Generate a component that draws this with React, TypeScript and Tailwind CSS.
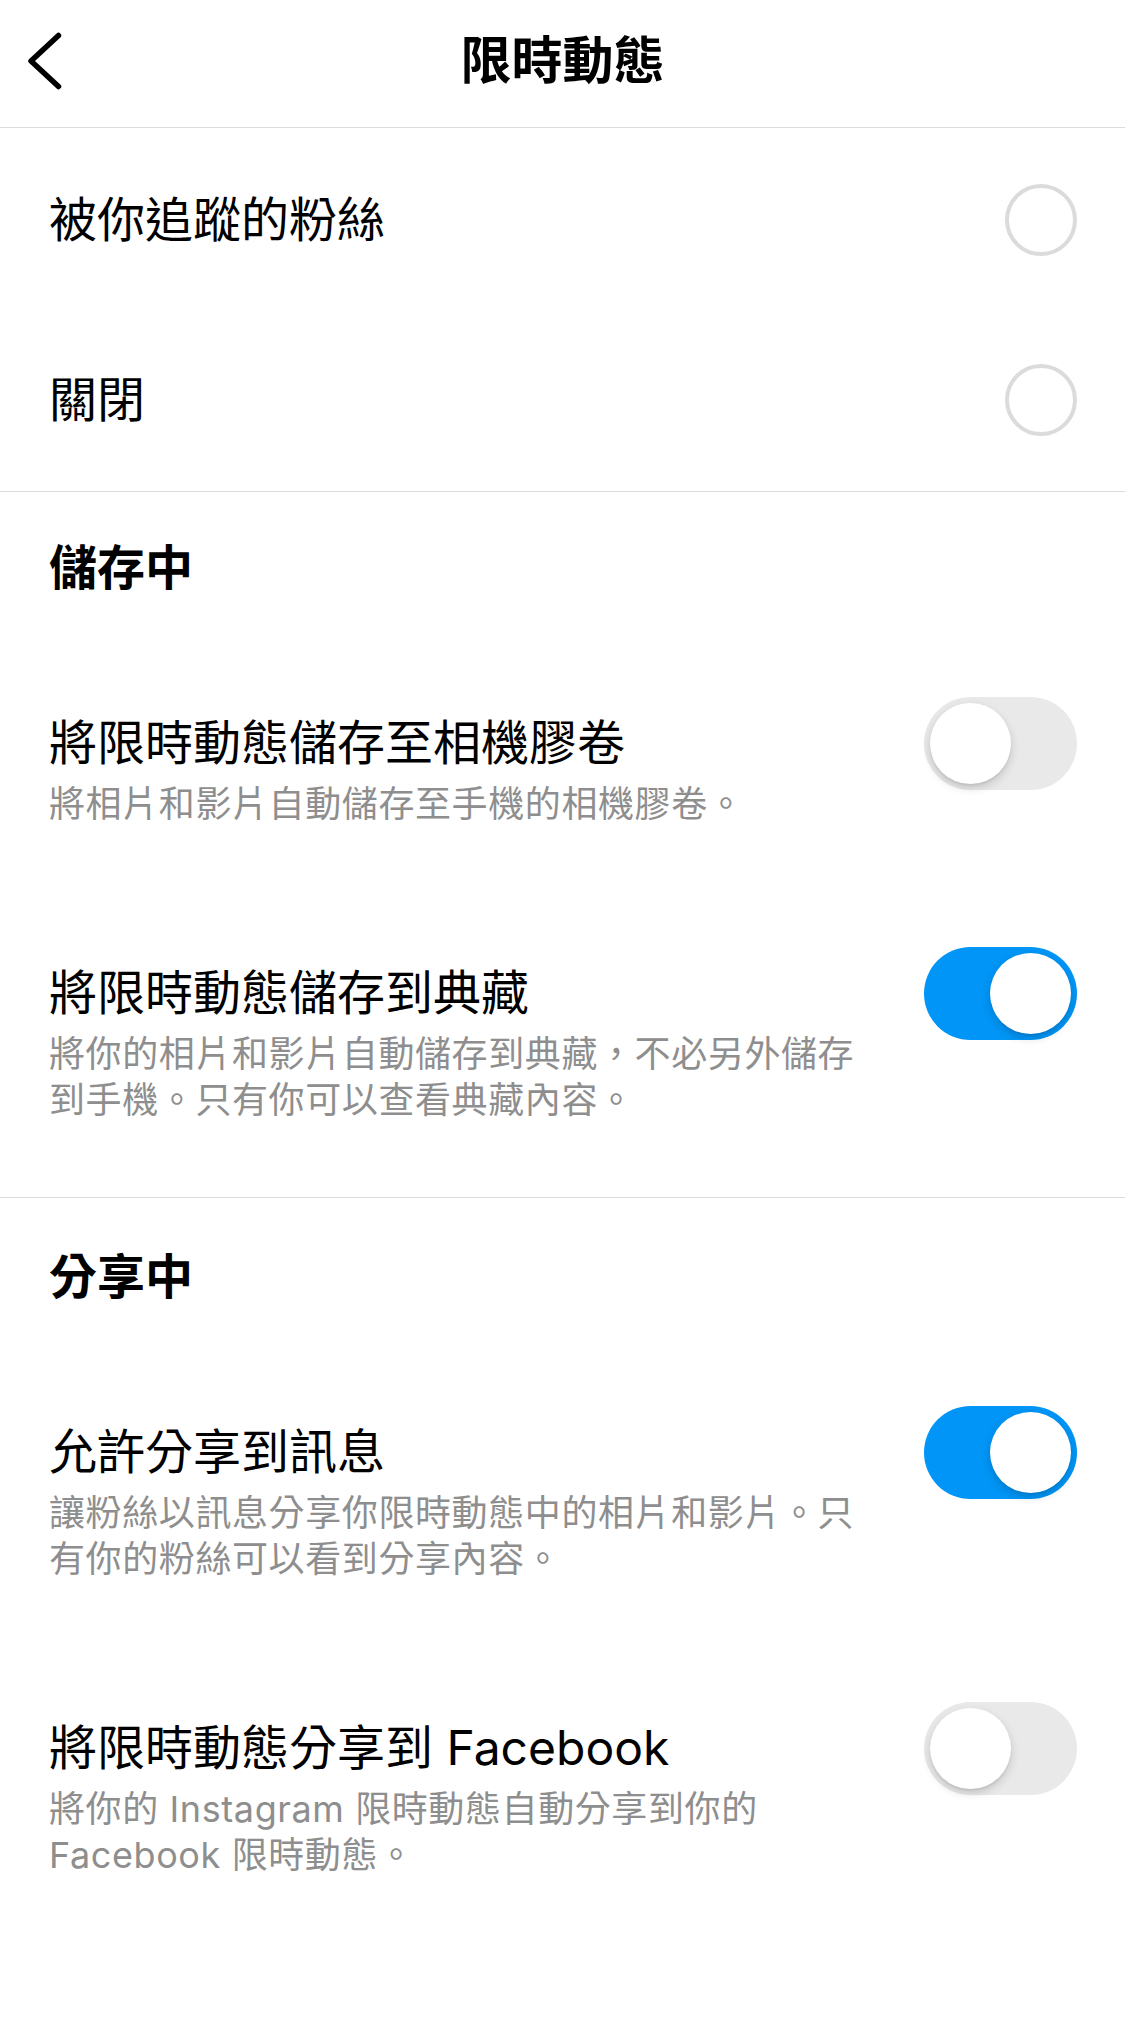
import React, { useState } from "react";

const font = { fontFamily: 'Inter, "Noto Sans CJK TC", "Noto Sans CJK SC", sans-serif' };

const Toggle = ({ on, onClick }: { on: boolean; onClick: () => void }) => (
	<button
		onClick={onClick}
		className={`relative flex h-[93px] w-[153px] shrink-0 items-center rounded-full px-[6px] ${
			on ? "justify-end bg-[#0095f6]" : "justify-start bg-[#e9e9ea]"
		}`}
	>
		<span className="block h-[81px] w-[81px] rounded-full bg-white shadow-[0_4px_10px_rgba(0,0,0,0.16),0_2px_2px_rgba(0,0,0,0.06)]" />
	</button>
);

const Radio = () => (
	<div className="h-[72px] w-[72px] rounded-full border-[4px] border-[#dbdbdb]" />
);

const settingRows = [
	{
		section: "儲存中",
		rows: [
			{
				title: "將限時動態儲存至相機膠卷",
				desc: "將相片和影片自動儲存至手機的相機膠卷。",
				on: false,
			},
			{
				title: "將限時動態儲存到典藏",
				desc: "將你的相片和影片自動儲存到典藏，不必另外儲存到手機。只有你可以查看典藏內容。",
				on: true,
			},
		],
	},
	{
		section: "分享中",
		rows: [
			{
				title: "允許分享到訊息",
				desc: "讓粉絲以訊息分享你限時動態中的相片和影片。只有你的粉絲可以看到分享內容。",
				on: true,
			},
			{
				title: "將限時動態分享到 Facebook",
				desc: "將你的 Instagram 限時動態自動分享到你的 Facebook 限時動態。",
				on: false,
			},
		],
	},
];

const StorySettings = () => {
	const [toggles, setToggles] = useState<boolean[][]>(
		settingRows.map((s) => s.rows.map((r) => r.on))
	);

	const flip = (si: number, ri: number) => {
		setToggles(
			toggles.map((sec, i) =>
				i === si ? sec.map((v, j) => (j === ri ? !v : v)) : sec
			)
		);
	};

	return (
		<div className="min-h-screen w-full bg-white text-black" style={font}>
			{/* Header */}
			<div className="grid h-[128px] grid-cols-[1fr_auto_1fr] items-center border-b border-[#dbdbdb] pb-[6px]">
				<div className="pl-[24px]">
					<svg width="40" height="60" viewBox="0 0 40 60" fill="none">
						<path
							d="M34.5 4.5 L7 30 L34.5 55.5"
							stroke="#000"
							strokeWidth="5.5"
							strokeLinecap="round"
							strokeLinejoin="round"
						/>
					</svg>
				</div>
				<h1 className="text-[51px] font-semibold leading-[60px]">限時動態</h1>
				<div />
			</div>

			{/* Audience */}
			<div className="border-b border-[#dbdbdb] pt-[2px] pb-[1px]">
				<div className="flex h-[180px] items-center justify-between pl-[49px] pr-[48px]">
					<span className="text-[48px] leading-[60px]">被你追蹤的粉絲</span>
					<Radio />
				</div>
				<div className="flex h-[180px] items-center justify-between pl-[49px] pr-[48px]">
					<span className="text-[48px] leading-[60px]">關閉</span>
					<Radio />
				</div>
			</div>

			{settingRows.map((sec, si) => (
				<div
					key={sec.section}
					className={si === 0 ? "border-b border-[#dbdbdb]" : ""}
				>
					<h2
						className={`pl-[49px] pb-[53px] text-[48px] font-bold leading-[60px] ${
							si === 0 ? "pt-[46px]" : "pt-[49px]"
						}`}
					>
						{sec.section}
					</h2>
					{sec.rows.map((row, ri) => (
						<div
							key={row.title}
							className="flex items-start justify-between pl-[49px] pr-[48px] pt-[62px] pb-[74px]"
						>
							<div className="w-[820px]">
								<div className="text-[48px] leading-[60px]">{row.title}</div>
								<p className="mt-[8px] text-[36px] leading-[46px] tracking-[0.6px] text-[#8e8e8e]">
									{row.desc}
								</p>
							</div>
							<div className="flex h-[60px] items-center">
								<Toggle on={toggles[si][ri]} onClick={() => flip(si, ri)} />
							</div>
						</div>
					))}
				</div>
			))}
		</div>
	);
};

export default StorySettings;
